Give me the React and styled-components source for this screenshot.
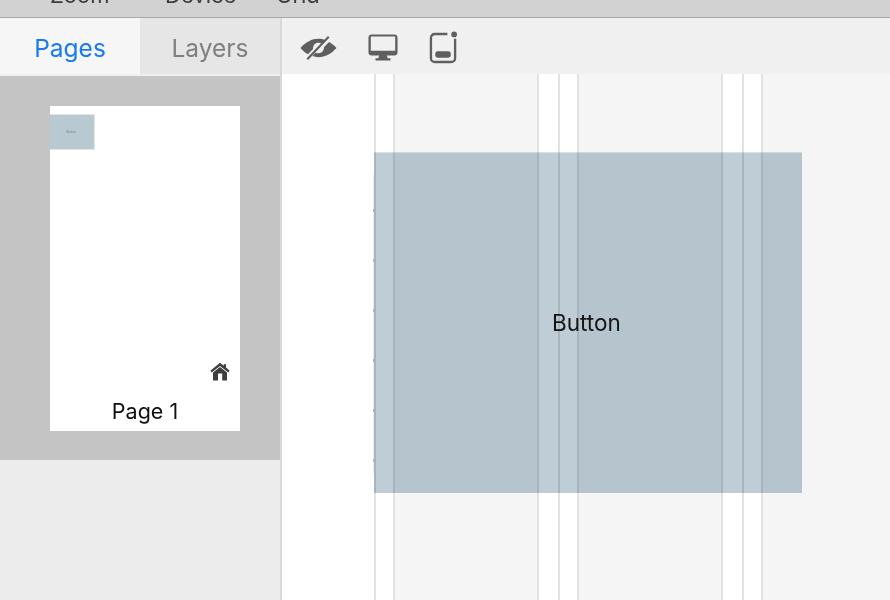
import React from "react";
import styled, { createGlobalStyle } from "styled-components";

const Global = createGlobalStyle`
  html, body { margin: 0; padding: 0; width: 890px; height: 600px; overflow: hidden; background: #ececec; }
  body { font-family: Inter, "Liberation Sans", sans-serif; }
`;

const Page = styled.div`
  width: 890px;
  height: 600px;
  display: flex;
  flex-direction: column;
  overflow: hidden;
`;

const MenuBar = styled.div`
  height: 17px;
  flex: none;
  background: #d2d2d2;
  border-bottom: 1px solid #a9a9a9;
  display: flex;
  align-items: flex-end;
  overflow: hidden;
  padding-left: 50px;
  box-sizing: content-box;
`;

const MenuItem = styled.span`
  font-size: 22px;
  line-height: 26px;
  height: 26px;
  flex: none;
  margin-bottom: 9px;
  width: ${(p) => p.$w}px;
  color: #3c3c3c;
`;

const Main = styled.div`
  flex: 1;
  display: flex;
  min-height: 0;
`;

const Sidebar = styled.aside`
  width: 280px;
  flex: none;
  background: #ececec;
  border-right: 2px solid #d8d8d8;
  display: flex;
  flex-direction: column;
`;

const Tabs = styled.div`
  height: 56px;
  flex: none;
  display: flex;
  border-bottom: 2px solid #f0f0f0;
`;

const Tab = styled.div`
  width: 140px;
  display: flex;
  align-items: center;
  justify-content: center;
  font-size: 24.5px;
  padding-top: 3px;
  box-sizing: border-box;
  background: ${(p) => (p.$active ? "#f6f6f6" : "#e6e6e6")};
  color: ${(p) => (p.$active ? "#1a7af2" : "#808080")};
`;

const Thumbs = styled.div`
  height: 384px;
  flex: none;
  background: #c4c4c4;
  padding: 30px 0 0 50px;
  box-sizing: border-box;
`;

const Thumb = styled.div`
  width: 190px;
  height: 325px;
  background: #fff;
  display: flex;
  flex-direction: column;
  padding-top: 8px;
  box-sizing: border-box;
`;

const MiniButton = styled.div`
  width: 45px;
  height: 36px;
  background: #b8c9d2;
  border: solid #dfe7eb;
  border-width: 1px 1px 1px 0;
  box-sizing: border-box;
  display: flex;
  align-items: center;
  justify-content: center;
  color: #6c7980;
  font-size: 3px;
  padding: 0 2px 1px 0;
`;

const HomeRow = styled.div`
  display: flex;
  justify-content: flex-end;
  margin-top: 212px;
  padding-right: 10px;
  height: 20px;
`;

const PageLabel = styled.div`
  font-size: 21.5px;
  line-height: 26px;
  margin-top: 16px;
  text-align: center;
  color: #111;
`;

const Editor = styled.section`
  flex: 1;
  display: flex;
  flex-direction: column;
  min-width: 0;
`;

const Toolbar = styled.div`
  height: 56px;
  flex: none;
  background: #f0f0f0;
  display: flex;
  align-items: center;
  padding-top: 3px;
  box-sizing: border-box;
  color: #5f5f5f;
`;

const ToolIcon = styled.svg`
  flex: none;
  display: block;
  margin-left: ${(p) => p.$ml}px;
`;

const Canvas = styled.div`
  position: relative;
  flex: 1;
  display: flex;
  background: #fff;
  overflow: hidden;
`;

const Band = styled.div`
  flex: none;
  width: ${(p) => p.$w}px;
  background: ${(p) => (p.$gray ? "#f5f5f5" : "#fff")};
  border-left: ${(p) => (p.$line ? "2px solid #e2e2e2" : "none")};
  box-sizing: border-box;
`;

const FillBand = styled.div`
  flex: 1;
  background: #f5f5f5;
`;

const CanvasButton = styled.div`
  position: absolute;
  left: 92px;
  top: 78px;
  width: 428px;
  height: 341px;
  background: #becdd6;
  mix-blend-mode: multiply;
  border-top: 1px solid #dce0e2;
  box-sizing: border-box;
`;

const CanvasLabel = styled.span`
  position: absolute;
  left: 270px;
  top: 235px;
  font-size: 22.5px;
  line-height: 28px;
  color: #141414;
`;

const Ruler = styled.div`
  position: absolute;
  left: 91px;
  top: 101px;
  width: 1px;
  height: 298px;
  background: #ececec;
`;

const Tick = styled.i`
  position: absolute;
  left: 91px;
  width: 3px;
  height: 3px;
  background: #a9b3b9;
`;

const bands = [
  { w: 92 },
  { w: 19, line: true },
  { w: 144, line: true, gray: true },
  { w: 21, line: true },
  { w: 19, line: true },
  { w: 144, line: true, gray: true },
  { w: 21, line: true },
  { w: 19, line: true },
];

export default function App() {
  return (
    <Page>
      <Global />
      <MenuBar>
        <MenuItem $w={115}>Zoom</MenuItem>
        <MenuItem $w={111}>Device</MenuItem>
        <MenuItem $w={60}>Grid</MenuItem>
      </MenuBar>
      <Main>
        <Sidebar>
          <Tabs>
            <Tab $active>Pages</Tab>
            <Tab>Layers</Tab>
          </Tabs>
          <Thumbs>
            <Thumb>
              <MiniButton>Button</MiniButton>
              <HomeRow>
                <svg width="20" height="20" viewBox="0 0 20 20" fill="#3d3d3d">
                  <path d="M10 0.8 L13.8 3.8 V2.2 H16 V5.6 L19.6 8.8 L18.4 10.6 L10 4 L1.6 10.6 L0.4 8.8 Z" />
                  <path fillRule="evenodd" d="M10 5 L17 10.4 V18.4 H3 V10.4 Z M8 11.5 V18.4 H12.2 V11.5 Z" />
                </svg>
              </HomeRow>
              <PageLabel>Page 1</PageLabel>
            </Thumb>
          </Thumbs>
        </Sidebar>
        <Editor>
          <Toolbar>
            <ToolIcon $ml={18} width="37" height="26" viewBox="0 0 38 26" fill="currentColor">
              <path d="M0.5 13 C6 7 12 3.6 19 3.6 C21.5 3.6 23.8 4 26 4.9 L22.6 8.5 C21.5 8 20.3 7.7 19 7.7 C15.4 7.7 13.1 10.4 13.4 14 L8.2 19.5 C5.2 17.9 2.7 15.6 0.5 13 Z" />
              <path d="M37.5 13 C32 19 26 22.4 19 22.4 C16.8 22.4 14.7 22.1 12.7 21.3 L16 17.8 C17 18.2 18 18.4 19 18.4 C22.4 18.4 24.7 15.7 24.6 12.3 L29.8 6.8 C32.8 8.4 35.4 10.5 37.5 13 Z" />
              <path d="M7.5 24.5 L29.5 1.5" stroke="currentColor" strokeWidth="2.2" fill="none" />
            </ToolIcon>
            <ToolIcon $ml={31} width="30" height="29" viewBox="0 0 32 30" fill="currentColor">
              <path fillRule="evenodd" d="M4 1 H28 A3.5 3.5 0 0 1 31.5 4.5 V20 A3.5 3.5 0 0 1 28 23.5 H4 A3.5 3.5 0 0 1 0.5 20 V4.5 A3.5 3.5 0 0 1 4 1 Z M3 3.2 V18.5 H29 V3.2 Z" />
              <path d="M12 23 H20 L21 26.5 H24 V28.8 H8 V26.5 H11 Z" />
            </ToolIcon>
            <ToolIcon $ml={31} width="29" height="33" viewBox="0 0 30 34" fill="none">
              <path d="M19 3 H6 A4 4 0 0 0 2 7 V28 A4 4 0 0 0 6 32 H23 A4 4 0 0 0 27 28 V8" stroke="currentColor" strokeWidth="2.4" />
              <circle cx="26" cy="3.5" r="3" fill="currentColor" />
              <rect x="6.5" y="21" width="16" height="6.5" rx="2.5" fill="currentColor" />
            </ToolIcon>
          </Toolbar>
          <Canvas>
            {bands.map((b, i) => (
              <Band key={i} $w={b.w} $line={b.line} $gray={b.gray} />
            ))}
            <Band $w={2} $line />
            <FillBand />
            <CanvasButton />
            <CanvasLabel>Button</CanvasLabel>
            <Ruler />
            {[135, 185, 235, 285, 335, 385].map((t) => (
              <Tick key={t} style={{ top: t }} />
            ))}
          </Canvas>
        </Editor>
      </Main>
    </Page>
  );
}
